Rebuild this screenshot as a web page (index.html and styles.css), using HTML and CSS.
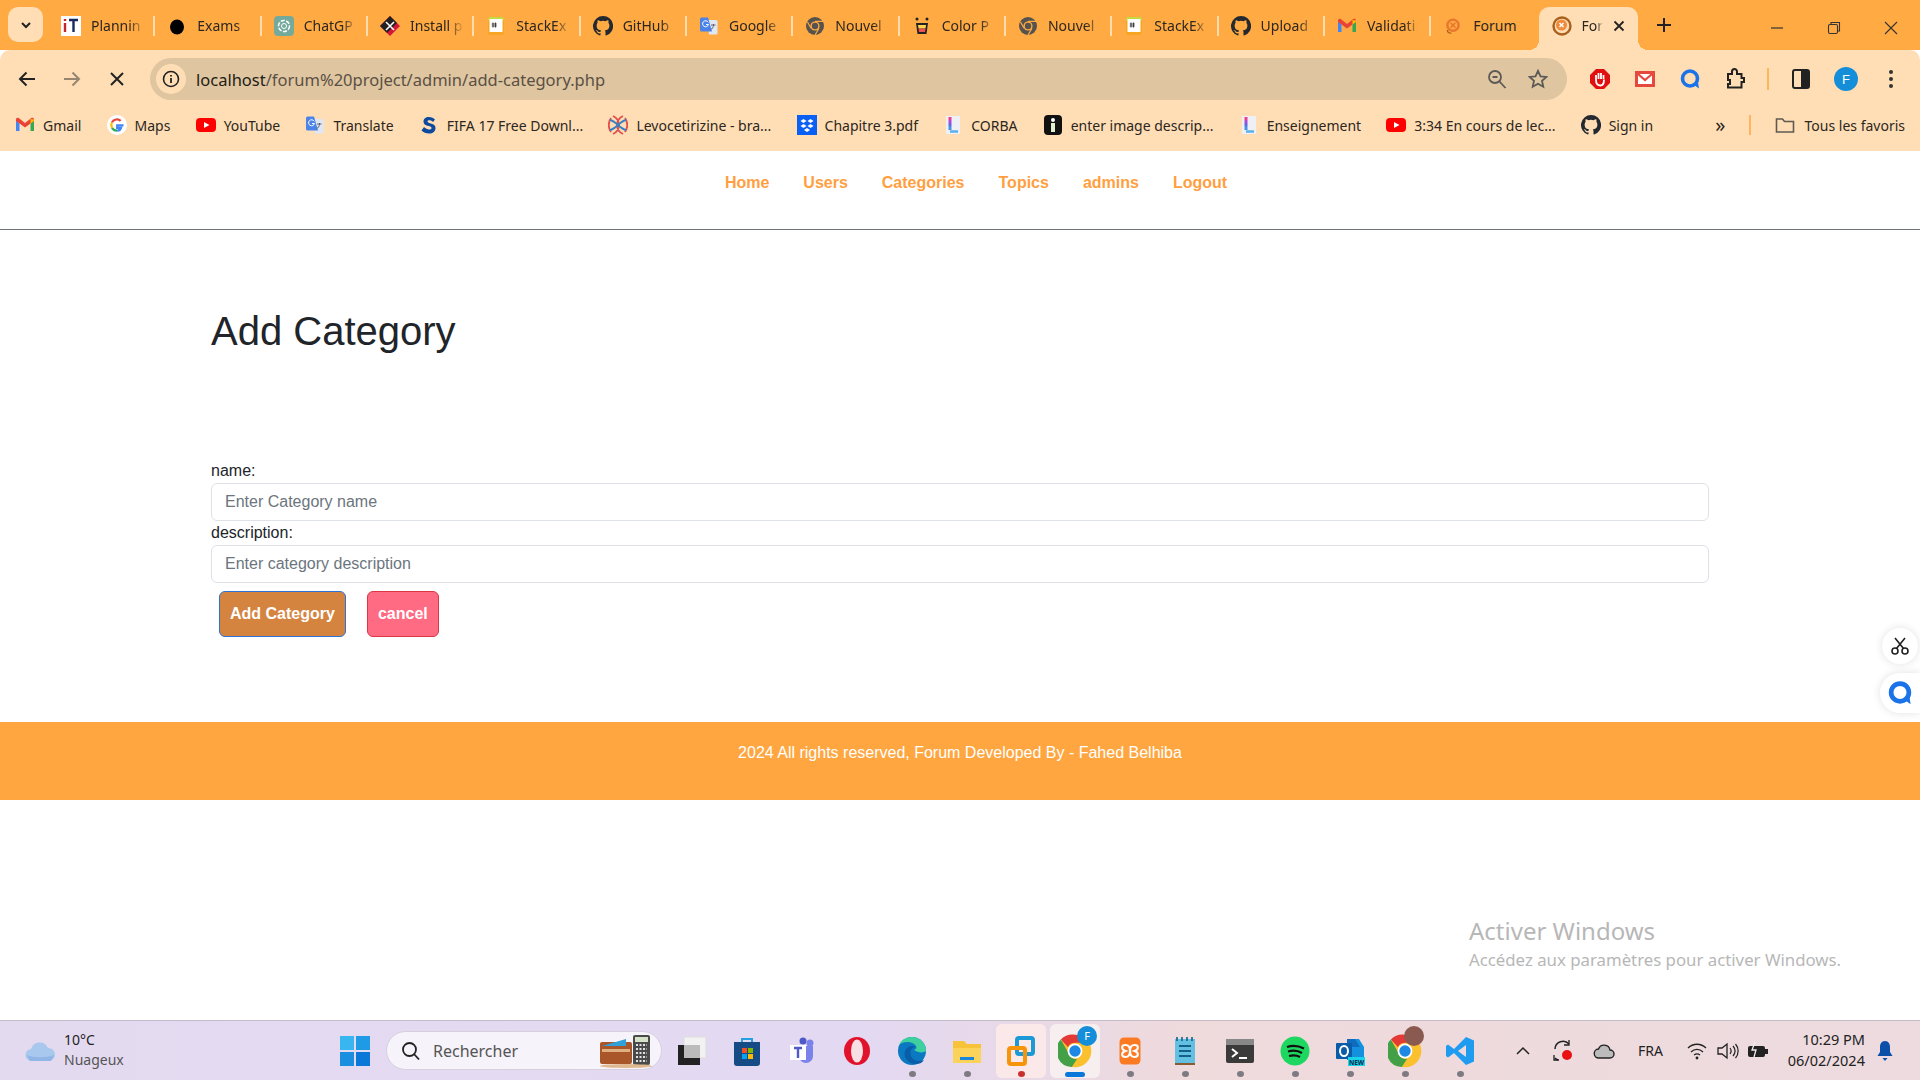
FILE: index.html
```html
<!DOCTYPE html>
<html lang="en">
<head>
    <meta charset="UTF-8">
    <title>Forum</title>
    <link rel="stylesheet" href="styles.css">
</head>
<body>

<svg class="defs" width="0" height="0">
    <symbol id="i-github" viewBox="0 0 16 16"><path fill="#24292f" d="M8 0a8 8 0 0 0-2.53 15.59c.4.07.55-.17.55-.38v-1.35c-2.23.48-2.7-1.07-2.7-1.07-.36-.92-.89-1.17-.89-1.17-.73-.5.05-.49.05-.49.8.06 1.23.83 1.23.83.71 1.22 1.87.87 2.33.66.07-.52.28-.87.5-1.07-1.78-.2-3.64-.89-3.64-3.95 0-.87.31-1.59.82-2.15-.08-.2-.36-1.02.08-2.12 0 0 .67-.21 2.2.82a7.6 7.6 0 0 1 4 0c1.53-1.04 2.2-.82 2.2-.82.44 1.1.16 1.92.08 2.12.51.56.82 1.27.82 2.15 0 3.07-1.87 3.75-3.65 3.95.29.25.54.73.54 1.48v2.2c0 .21.15.46.55.38A8 8 0 0 0 8 0z"/></symbol>
    <symbol id="i-chromegrey" viewBox="0 0 20 20"><circle cx="10" cy="10" r="9" fill="#56524e"/><circle cx="10" cy="10" r="4.6" fill="#ffaa42"/><circle cx="10" cy="10" r="3.2" fill="#56524e"/><path d="M10 5.4h8M6 12.3 2.5 6M14 12.3 10 19" stroke="#ffaa42" stroke-width="1.2"/></symbol>
    <symbol id="i-stack" viewBox="0 0 20 20"><rect x="2" y="1" width="16" height="18" rx="3" fill="#f5a623"/><rect x="2" y="1" width="16" height="4" rx="2" fill="#c7d93f"/><rect x="3.5" y="3" width="13" height="13" fill="#fff"/><path d="M7 6.5v5M9.5 6.5v5M5.8 8h5M5.8 10h5" stroke="#333" stroke-width=".9"/></symbol>
    <symbol id="i-translate" viewBox="0 0 20 20"><path d="M9 4h8a1.5 1.5 0 0 1 1.5 1.5V17a1.5 1.5 0 0 1-1.5 1.5h-7z" fill="#dfe7f5"/><path d="M2.5 1.5H9l4 14H2.5A1.5 1.5 0 0 1 1 14V3a1.5 1.5 0 0 1 1.5-1.5z" fill="#4a84e8"/><path d="M9.2 6.3a3 3 0 1 0 .3 2.2H7" fill="none" stroke="#fff" stroke-width="1"/><path d="M12 9h4.5M14.5 8v1c0 2-1.5 4-3 5" fill="none" stroke="#5f6368" stroke-width="1"/></symbol>
    <symbol id="i-youtube" viewBox="0 0 20 20"><rect y="3" width="20" height="14" rx="4" fill="#f00"/><path d="M8 7l5.5 3L8 13z" fill="#fff"/></symbol>
    <symbol id="i-gmail" viewBox="0 0 20 20"><path d="M1 5.500V16h3.500V8.500z" fill="#4285f4"/><path d="M19 5.500V16h-3.500V8.500z" fill="#34a853"/><path d="M1 6V4.500C1 3 2.800 2.300 4 3.300l6 4.700 6-4.700c1.200-1 3-.3 3 1.200V6l-3.500 2.500L10 12.500 4.500 8.500z" fill="#ea4335"/><path d="M15.500 3.900 19 4.500V6l-3.500 2.500z" fill="#fbbc04"/></symbol>
    <symbol id="i-xampp" viewBox="0 0 20 20"><rect x="3" y="1" width="14" height="18" rx="3" fill="#fb7a24"/><path d="M7 6c3 0 3 3 3 4s0 4-3 4-3-3 0-4c-3-1-3-4 0-4zM13 6c-3 0-3 3-3 4s0 4 3 4 3-3 0-4c3-1 3-4 0-4z" fill="none" stroke="#fff" stroke-width="1.4"/></symbol>
    <symbol id="i-chrome" viewBox="0 0 48 48"><circle cx="24" cy="24" r="23" fill="#fbc02d"/><path d="M24 1a23 23 0 0 1 20 11.500H24a11.500 11.500 0 0 0-10 5.800L4 7.800A23 23 0 0 1 24 1z" fill="#e53935"/><path d="M4 7.800l10 17.700A11.500 11.500 0 0 0 27 35l-7.500 11.600A23 23 0 0 1 4 7.800z" fill="#43a047"/><circle cx="24" cy="24" r="10.500" fill="#fff"/><circle cx="24" cy="24" r="8" fill="#1e88e5"/></symbol>
    <symbol id="i-book" viewBox="0 0 20 20"><rect x="3" y="1" width="14" height="18" fill="#eef0f6"/><path d="M7 2v3" stroke="#e83e8c" stroke-width="3"/><path d="M7 5v3" stroke="#b04ad0" stroke-width="3"/><path d="M7 8v3" stroke="#6a62e0" stroke-width="3"/><path d="M7 11v4" stroke="#4a90e2" stroke-width="3"/><path d="M7 16.500h8" stroke="#5ab0e8" stroke-width="2.500"/></symbol>
</svg>

<div class="tabstrip">
    <button class="tab-list"><svg width="14" height="14" viewBox="0 0 14 14"><path d="M3 5l4 4 4-4" fill="none" stroke="#222" stroke-width="2"/></svg></button>
    <div class="tab"><svg class="ico" viewBox="0 0 20 20"><rect width="20" height="20" fill="#fff"/><path d="M4 3v2M4 7v9" stroke="#c62828" stroke-width="2.4"/><path d="M8 4h9M12.500 4v12" stroke="#1a2a5e" stroke-width="2.4"/></svg><span class="tab-title">Plannin</span></div>
    <div class="tab"><svg class="ico" viewBox="0 0 20 20"><ellipse cx="10" cy="11" rx="7" ry="7.500" fill="#000"/></svg><span class="tab-title">Exams</span></div>
    <div class="tab"><svg class="ico" viewBox="0 0 20 20"><rect width="20" height="20" rx="4" fill="#74aa9c"/><circle cx="10" cy="10" r="5.500" fill="none" stroke="#fff" stroke-width="1.5" stroke-dasharray="4 1.500"/><circle cx="10" cy="10" r="2.500" fill="none" stroke="#fff"/></svg><span class="tab-title">ChatGP</span></div>
    <div class="tab"><svg class="ico" viewBox="0 0 20 20"><path d="M10 0l10 10-10 10L0 10z" fill="#d4153a"/><path d="M10 0l7 7-10 10-7-7z" fill="#222"/><path d="M6 6l8 8M14 6l-8 8" stroke="#fff" stroke-width="1.6"/></svg><span class="tab-title">Install p</span></div>
    <div class="tab"><svg class="ico"><use href="#i-stack"/></svg><span class="tab-title">StackEx</span></div>
    <div class="tab"><svg class="ico"><use href="#i-github"/></svg><span class="tab-title">GitHub</span></div>
    <div class="tab"><svg class="ico"><use href="#i-translate"/></svg><span class="tab-title">Google</span></div>
    <div class="tab"><svg class="ico"><use href="#i-chromegrey"/></svg><span class="tab-title">Nouvel</span></div>
    <div class="tab"><svg class="ico" viewBox="0 0 20 20"><path d="M4 7h12l-1.500 11h-9z" fill="#222"/><path d="M6 9h8l-.5 3.500h-7z" fill="#ffd54f"/><path d="M6.600 12.500h6.900l-.5 3.500H7z" fill="#ef5350"/><circle cx="5" cy="3" r="1.500" fill="#222"/><circle cx="15" cy="3" r="1.500" fill="#222"/></svg><span class="tab-title">Color P</span></div>
    <div class="tab"><svg class="ico"><use href="#i-chromegrey"/></svg><span class="tab-title">Nouvel</span></div>
    <div class="tab"><svg class="ico"><use href="#i-stack"/></svg><span class="tab-title">StackEx</span></div>
    <div class="tab"><svg class="ico"><use href="#i-github"/></svg><span class="tab-title">Upload</span></div>
    <div class="tab"><svg class="ico"><use href="#i-gmail"/></svg><span class="tab-title">Validati</span></div>
    <div class="tab tab-last"><svg class="ico ico-small" viewBox="0 0 20 20"><circle cx="10" cy="9" r="7" fill="none" stroke="#e8772e" stroke-width="3"/><path d="M7 6l6 6M13 6l-6 6" stroke="#e8772e" stroke-width="2"/><path d="M3 15c0 3 3 4 5 4" fill="none" stroke="#a8601c" stroke-width="1.6"/></svg><span class="tab-title">Forum</span></div>
    <div class="tab-active">
        <svg class="ico" viewBox="0 0 20 20"><circle cx="10" cy="10" r="8.500" fill="none" stroke="#a8601c" stroke-width="2.4"/><circle cx="9.500" cy="9" r="5.500" fill="#f08a3c"/><path d="M7.500 7l4 4M11.500 7l-4 4" stroke="#fff" stroke-width="1.5"/></svg>
        <span class="tab-title tab-title-short">For</span>
        <svg class="tab-close" width="12" height="12" viewBox="0 0 12 12"><path d="M1.500 1.500l9 9M10.500 1.500l-9 9" stroke="#222" stroke-width="1.8"/></svg>
    </div>
    <svg class="new-tab" width="16" height="16" viewBox="0 0 16 16"><path d="M8 1v14M1 8h14" stroke="#222" stroke-width="2"/></svg>
    <div class="win-controls">
        <svg width="14" height="14" viewBox="0 0 14 14"><path d="M1 7h12" stroke="#333" stroke-width="1.2"/></svg>
        <svg width="14" height="14" viewBox="0 0 14 14"><rect x="1.500" y="3.500" width="9" height="9" rx="1.500" fill="none" stroke="#333" stroke-width="1.1"/><path d="M4 3V1.500h8.500V10H11" fill="none" stroke="#333" stroke-width="1.1"/></svg>
        <svg width="14" height="14" viewBox="0 0 14 14"><path d="M1 1l12 12M13 1L1 13" stroke="#333" stroke-width="1.1"/></svg>
    </div>
</div>

<div class="toolbar">
    <svg class="nav-btn" viewBox="0 0 20 20"><path d="M18 10H3M9.500 3.500 3 10l6.500 6.500" fill="none" stroke="#222" stroke-width="2"/></svg>
    <svg class="nav-btn" viewBox="0 0 20 20"><path d="M2 10h15M10.500 3.500 17 10l-6.500 6.500" fill="none" stroke="#96866f" stroke-width="2"/></svg>
    <svg class="nav-btn" viewBox="0 0 20 20"><path d="M4 4l12 12M16 4 4 16" fill="none" stroke="#222" stroke-width="2"/></svg>
    <div class="omnibox">
        <span class="site-info"><svg width="18" height="18" viewBox="0 0 18 18"><circle cx="9" cy="9" r="7.500" fill="none" stroke="#222" stroke-width="1.6"/><path d="M9 8v5M9 5v1.600" stroke="#222" stroke-width="1.8"/></svg></span>
        <span class="url"><b>localhost</b>/forum%20project/admin/add-category.php</span>
        <svg class="omni-ico" viewBox="0 0 20 20"><circle cx="8" cy="8" r="6" fill="none" stroke="#5c5a56" stroke-width="1.8"/><path d="M12.500 12.500l6 6.500M5.500 8h5" stroke="#5c5a56" stroke-width="1.8"/></svg>
        <svg class="omni-ico" viewBox="0 0 20 20"><path d="M10 1.800l2.500 5.500 6 .6-4.500 4 1.300 5.900L10 14.800l-5.300 3 1.300-5.900-4.500-4 6-.6z" fill="none" stroke="#5c5a56" stroke-width="1.8"/></svg>
    </div>
    <div class="ext-row">
        <svg class="ext" viewBox="0 0 22 22"><path d="M7 1h8l6 6v8l-6 6H7l-6-6V7z" fill="#e01010"/><path d="M7 12V7M9.500 11V5M12 11V5M14.500 11V7M7 12c0 4 2 5.500 4.500 5.500s3.500-2 3.500-6" fill="none" stroke="#fff" stroke-width="1.8"/></svg>
        <svg class="ext" viewBox="0 0 22 22"><rect x="1" y="3" width="20" height="16" fill="#e5483c"/><rect x="4" y="6" width="14" height="10" fill="#fff"/><path d="M4 6l7 6 7-6" fill="none" stroke="#e5483c" stroke-width="2.2"/></svg>
        <svg class="ext" viewBox="0 0 22 22"><circle cx="11" cy="10.500" r="7.500" fill="none" stroke="#1a73e8" stroke-width="3.6"/><path d="M15 17l5 3.500-1-6z" fill="#1a73e8"/></svg>
        <svg class="ext" viewBox="0 0 22 22"><path d="M4 6h4V3.500a2 2 0 0 1 5 0V6h4.500v4H20v4h-2.500v5.500H4V16h2v-4H4z" fill="none" stroke="#222" stroke-width="2"/></svg>
        <span class="ext-sep"></span>
        <svg class="ext" viewBox="0 0 22 22"><rect x="3" y="2" width="16" height="18" rx="2" fill="none" stroke="#222" stroke-width="2"/><rect x="11" y="2" width="8" height="18" fill="#222"/></svg>
        <span class="avatar">F</span>
        <svg class="ext ext-menu" viewBox="0 0 6 22"><circle cx="3" cy="4" r="2" fill="#333"/><circle cx="3" cy="11" r="2" fill="#333"/><circle cx="3" cy="18" r="2" fill="#333"/></svg>
    </div>
</div>

<div class="bookmarks">
    <span class="bm"><svg class="ico"><use href="#i-gmail"/></svg>Gmail</span>
    <span class="bm"><svg class="ico" viewBox="0 0 20 20"><circle cx="10" cy="10" r="10" fill="#fff"/><path d="M16.500 10.300h-6.300v2.600H14c-.5 1.700-2 2.800-3.900 2.800" fill="none" stroke="#4285f4" stroke-width="2.2"/><path d="M10 15.700a5.700 5.700 0 0 1-5-3" fill="none" stroke="#34a853" stroke-width="2.2"/><path d="M5 12.700a5.700 5.700 0 0 1 0-5.400" fill="none" stroke="#fbbc04" stroke-width="2.2"/><path d="M5 7.300a5.700 5.700 0 0 1 8.700-1.500" fill="none" stroke="#ea4335" stroke-width="2.2"/></svg>Maps</span>
    <span class="bm"><svg class="ico"><use href="#i-youtube"/></svg>YouTube</span>
    <span class="bm"><svg class="ico"><use href="#i-translate"/></svg>Translate</span>
    <span class="bm"><svg class="ico" viewBox="0 0 20 20"><path d="M16 4.500C14.500 3 12.500 2 10 2 6.500 2 4.500 4 4.500 6.500c0 5.500 8 3.500 8 6.500 0 1-1 1.500-2.500 1.500s-3.500-1-5-2.500L2.500 15.500C4.500 17.500 7 18.500 10 18.500c4 0 6.500-2 6.500-5.500 0-5.500-8-4-8-6.500 0-.8.7-1.200 1.800-1.200 1.400 0 2.800.7 3.700 1.600z" fill="#0b4a9e"/></svg>FIFA 17 Free Downl...</span>
    <span class="bm"><svg class="ico" viewBox="0 0 20 20"><path d="M5 1c8 4 8 14 0 18M15 1C7 5 7 15 15 19M3 3c-3 4-3 10 0 14M17 3c3 4 3 10 0 14" fill="none" stroke="#e0504c" stroke-width="1.8"/><path d="M2 5c6 1 10 9 16 10M18 5C12 6 8 14 2 15" fill="none" stroke="#3a7fc4" stroke-width="1.8"/></svg>Levocetirizine - bra...</span>
    <span class="bm"><svg class="ico" viewBox="0 0 20 20"><rect width="20" height="20" fill="#0a5ff5"/><path d="M6.500 4l3 2-3 2-3-2zM13.500 4l3 2-3 2-3-2zM6.500 9l3 2-3 2-3-2zM13.500 9l3 2-3 2-3-2zM10 13l3 2-3 2-3-2z" fill="#fff"/></svg>Chapitre 3.pdf</span>
    <span class="bm"><svg class="ico"><use href="#i-book"/></svg>CORBA</span>
    <span class="bm"><svg class="ico" viewBox="0 0 20 20"><rect x="1" width="18" height="20" rx="4" fill="#111"/><circle cx="10" cy="5" r="2" fill="#fff"/><rect x="8" y="8" width="4" height="9" fill="#dff0d0"/></svg>enter image descrip...</span>
    <span class="bm"><svg class="ico"><use href="#i-book"/></svg>Enseignement</span>
    <span class="bm"><svg class="ico"><use href="#i-youtube"/></svg>3:34 En cours de lec...</span>
    <span class="bm"><svg class="ico"><use href="#i-github"/></svg>Sign in</span>
    <span class="bm-more">»</span>
    <span class="bm-sep"></span>
    <span class="bm bm-all"><svg class="ico" viewBox="0 0 20 20"><path d="M1.500 4h6l2 2.500h9V17h-17z" fill="none" stroke="#5f5a52" stroke-width="1.6"/></svg>Tous les favoris</span>
</div>

<div class="page">
    <nav class="site-nav">
        <a href="#">Home</a>
        <a href="#">Users</a>
        <a href="#">Categories</a>
        <a href="#">Topics</a>
        <a href="#">admins</a>
        <a href="#">Logout</a>
    </nav>

    <main class="content">
        <h1>Add Category</h1>
        <form class="cat-form">
            <label for="catName">name:</label>
            <input type="text" id="catName" placeholder="Enter Category name">
            <label for="catDesc">description:</label>
            <input type="text" id="catDesc" placeholder="Enter category description">
            <div class="form-actions">
                <button type="button" class="btn btn-add">Add Category</button>
                <button type="button" class="btn btn-cancel">cancel</button>
            </div>
        </form>
    </main>

    <footer class="site-footer">2024 All rights reserved, Forum Developed By - Fahed Belhiba</footer>

    <div class="side-tools">
        <span class="side-btn"><svg width="20" height="20" viewBox="0 0 20 20"><circle cx="5" cy="15" r="3" fill="none" stroke="#222" stroke-width="1.6"/><circle cx="15" cy="15" r="3" fill="none" stroke="#222" stroke-width="1.6"/><path d="M6.500 12.500 15 2M13.500 12.500 5 2" stroke="#222" stroke-width="1.6"/></svg></span>
        <span class="side-btn side-btn-wide"><svg width="26" height="26" viewBox="0 0 22 22"><circle cx="11" cy="10.500" r="7.500" fill="none" stroke="#1a73e8" stroke-width="4"/><path d="M15 17l5 3.500-1-6z" fill="#1a73e8"/></svg></span>
    </div>

    <div class="activate">
        <div class="activate-title">Activer Windows</div>
        <div class="activate-sub">Accédez aux paramètres pour activer Windows.</div>
    </div>
</div>

<div class="taskbar">
    <div class="weather">
        <svg width="32" height="24" viewBox="0 0 32 24"><path d="M8 22a6 6 0 0 1-1-12 9 9 0 0 1 17-1 6.500 6.500 0 0 1 1 13z" fill="#a9c8ee"/><path d="M3 16c6 3 20 3 27 0l-3 6H6z" fill="#8fb6e6"/></svg>
        <div class="weather-text"><span>10°C</span><span class="weather-sub">Nuageux</span></div>
    </div>
    <div class="task-center">
        <svg class="start" viewBox="0 0 30 30"><rect width="14" height="14" fill="#38b6f0"/><rect x="16" width="14" height="14" fill="#1f9be6"/><rect y="16" width="14" height="14" fill="#1a8fe0"/><rect x="16" y="16" width="14" height="14" fill="#0a78d8"/></svg>
        <div class="search">
            <svg width="20" height="20" viewBox="0 0 20 20"><circle cx="8.500" cy="8.500" r="6.500" fill="none" stroke="#222" stroke-width="1.8"/><path d="M13 13l5 5.500" stroke="#222" stroke-width="1.8"/></svg>
            <span class="search-text">Rechercher</span>
            <svg class="search-art" width="54" height="34" viewBox="0 0 54 34"><rect x="0" y="8" width="32" height="22" rx="2" fill="#a9572a"/><path d="M2 12l24-7v7z" fill="#2fa0d8"/><rect x="2" y="15" width="28" height="3" fill="#e0b080"/><rect x="33" y="1" width="17" height="30" rx="2" fill="#4a4a4a"/><rect x="35" y="3" width="13" height="5" fill="#d5e2c8"/><path d="M36 11h11M36 15h11M36 19h11M36 23h11M36 27h11" stroke="#e0e0e0" stroke-width="2" stroke-dasharray="2 1.500"/><ellipse cx="26" cy="32" rx="26" ry="2" fill="#e0b890"/></svg>
        </div>
        <div class="app">
            <svg class="app-ico" viewBox="0 0 30 30"><rect x="7" y="1" width="22" height="21" fill="#f2f2f2" stroke="#ddd"/><rect x="1" y="9" width="22" height="20" fill="#222"/><rect x="7" y="9" width="16" height="13" fill="#bbb"/></svg>
        </div>
        <div class="app">
            <svg class="app-ico" viewBox="0 0 30 30"><path d="M10 6V3h10v3" fill="none" stroke="#25a0e0" stroke-width="2"/><path d="M2 6h26v21a3 3 0 0 1-3 3H5a3 3 0 0 1-3-3z" fill="#164c86"/><rect x="10" y="12" width="5" height="5" fill="#f25022"/><rect x="16" y="12" width="5" height="5" fill="#7fba00"/><rect x="10" y="18" width="5" height="5" fill="#00a4ef"/><rect x="16" y="18" width="5" height="5" fill="#ffb900"/></svg>
        </div>
        <div class="app">
            <svg class="app-ico" viewBox="0 0 30 30"><circle cx="23" cy="7" r="3.500" fill="#7b83eb"/><circle cx="16" cy="5" r="3.500" fill="#5059c9"/><path d="M12 10h14v10a7 7 0 0 1-14 0z" fill="#7b83eb"/><rect x="3" y="9" width="16" height="15" fill="#fff"/><path d="M7 12h8M11 12v10" stroke="#5059c9" stroke-width="2.4"/></svg>
        </div>
        <div class="app">
            <svg class="app-ico" viewBox="0 0 30 30"><ellipse cx="15" cy="15" rx="13" ry="14" fill="#e0122c"/><ellipse cx="15" cy="15" rx="6" ry="11.500" fill="#f7e0e4"/></svg>
        </div>
        <div class="app app-open">
            <svg class="app-ico" viewBox="0 0 30 30"><circle cx="15" cy="15" r="14" fill="#0b78c2"/><path d="M29 15c0-8-6-14-14-14C9 1 4 4 2 9c4-4 14-4 17 1 1 2 0 3-2 4 4 3 10 3 12 1z" fill="#3fd0a0"/><path d="M14 20c-2-5 1-9 5-9-3-2-9-1-11 4-2 6 3 13 11 13 3 0 6-1 8-4-5 2-11 1-13-4z" fill="#0a5ea8"/></svg>
        </div>
        <div class="app app-open">
            <svg class="app-ico" viewBox="0 0 30 30"><path d="M1 5h11l3 3h14v19H1z" fill="#f8c33a"/><rect x="1" y="12" width="28" height="15" fill="#fbd35a"/><rect x="8" y="21" width="14" height="3" fill="#1a86d8"/></svg>
        </div>
        <div class="app app-open app-vm">
            <svg class="app-ico" viewBox="0 0 30 30"><rect x="11" y="2" width="16" height="16" rx="2" fill="none" stroke="#1c9ad6" stroke-width="4"/><rect x="3" y="12" width="16" height="16" rx="2" fill="none" stroke="#f7950a" stroke-width="4"/></svg>
        </div>
        <div class="app app-open app-current">
            <svg class="app-ico app-chrome"><use href="#i-chrome"/></svg>
            <span class="app-badge">F</span>
        </div>
        <div class="app app-open">
            <svg class="app-ico"><use href="#i-xampp"/></svg>
        </div>
        <div class="app app-open">
            <svg class="app-ico" viewBox="0 0 30 30"><rect x="5" y="3" width="20" height="26" fill="#63c0e0"/><rect x="5" y="27" width="20" height="2" fill="#8a5a30"/><path d="M9 10h12M9 15h12M9 20h12" stroke="#13608c" stroke-width="2"/><path d="M7 1v4M12 1v4M17 1v4M22 1v4" stroke="#13608c" stroke-width="1.6"/></svg>
        </div>
        <div class="app app-open">
            <svg class="app-ico" viewBox="0 0 30 30"><rect x="1" y="3" width="28" height="24" rx="2" fill="#3a3a3a"/><rect x="1" y="3" width="28" height="6" fill="#888"/><path d="M7 13l5 4-5 4M14 22h8" fill="none" stroke="#fff" stroke-width="2"/></svg>
        </div>
        <div class="app app-open">
            <svg class="app-ico" viewBox="0 0 30 30"><circle cx="15" cy="15" r="14.500" fill="#1ed760"/><path d="M7 11c6-2 12-1 17 1.500M8 15.500c5-1.500 10-1 14 1.500M9 20c4-1 8-.7 11 1" fill="none" stroke="#111" stroke-width="2.2"/></svg>
        </div>
        <div class="app app-open">
            <svg class="app-ico" viewBox="0 0 30 30"><path d="M12 3h12l5 8v13H12z" fill="#1490df"/><path d="M12 3h8l5 8H12z" fill="#0f6cbd"/><rect x="1" y="7" width="16" height="16" rx="1" fill="#0a5ca8"/><ellipse cx="9" cy="15" rx="4" ry="5" fill="none" stroke="#fff" stroke-width="2"/><rect x="13" y="21" width="17" height="9" fill="#19d3e8"/><text class="new-label" x="21.500" y="28.500">NEW</text></svg>
        </div>
        <div class="app app-open">
            <svg class="app-ico app-chrome"><use href="#i-chrome"/></svg>
            <span class="app-badge app-badge-photo"></span>
        </div>
        <div class="app app-open">
            <svg class="app-ico" viewBox="0 0 30 30"><path d="M21 1 9 13 3 8.500 1 10v10l2 1.500L9 17l12 12 8-3.500V4.500zM21 9v12l-8-6z" fill="#1f9cf0"/></svg>
        </div>
    </div>
    <div class="tray">
        <svg class="tray-up" width="14" height="9" viewBox="0 0 14 9"><path d="M1 8l6-6 6 6" fill="none" stroke="#222" stroke-width="1.5"/></svg>
        <svg class="tray-sync" width="22" height="24" viewBox="0 0 22 24"><path d="M3 10a8 8 0 0 1 14-5M3 19a8 8 0 0 0 3 2" fill="none" stroke="#222" stroke-width="1.5"/><path d="M17 1v5h-5M2 16v5h5" fill="none" stroke="#222" stroke-width="1.3"/><circle cx="15" cy="16" r="5" fill="#e81010"/></svg>
        <svg class="tray-cloud" width="22" height="18" viewBox="0 0 22 18"><path d="M6 16a4.500 4.500 0 0 1-.5-9 6 6 0 0 1 11.500 1 4 4 0 0 1 0 8z" fill="#bbb" stroke="#222" stroke-width="1.4"/></svg>
        <span class="tray-lang">FRA</span>
        <svg class="tray-wifi" width="20" height="18" viewBox="0 0 20 18"><path d="M1 6c5-5 13-5 18 0M4 10c3.500-3.500 8.500-3.500 12 0M7 13c2-1.500 4-1.500 6 0" fill="none" stroke="#222" stroke-width="1.3"/><circle cx="10" cy="16" r="1.400" fill="#222"/></svg>
        <svg class="tray-vol" width="22" height="18" viewBox="0 0 22 18"><path d="M1 6h4l5-4v14l-5-4H1z" fill="none" stroke="#222" stroke-width="1.3"/><path d="M13 6c1.500 2 1.500 4 0 6M16 4c2.500 3 2.500 7 0 10M18.500 2c3.500 4 3.500 10 0 14" fill="none" stroke="#222" stroke-width="1.2"/></svg>
        <svg class="tray-bat" width="22" height="18" viewBox="0 0 22 18"><rect x="1" y="4" width="17" height="11" rx="2" fill="#222"/><rect x="18" y="7" width="3" height="5" fill="#222"/><path d="M8 0 5 8h4l-2 7" fill="none" stroke="#eee" stroke-width="1.3"/></svg>
        <div class="clock"><span>10:29 PM</span><span>06/02/2024</span></div>
        <svg class="tray-bell" width="18" height="22" viewBox="0 0 18 22"><path d="M9 1c-3.500 0-5 3-5 6v5l-2.500 4h15L14 12V7c0-3-1.500-6-5-6z" fill="#0b4fa8"/><path d="M6.500 18h5l-2.500 3z" fill="#0b4fa8"/></svg>
    </div>
</div>

</body>
</html>
```

FILE: styles.css
```css
* {
    box-sizing: border-box;
}
html, body {
    margin: 0;
    padding: 0;
}
body {
    width: 1920px;
    height: 1080px;
    overflow: hidden;
    display: flex;
    flex-direction: column;
    font-family: "Liberation Sans", Arial, sans-serif;
    background-color: #fff;
}
.defs {
    position: absolute;
}
.ico {
    width: 20px;
    height: 20px;
    flex: none;
}

/* browser tabs */
.tabstrip {
    height: 50px;
    flex: none;
    display: flex;
    align-items: flex-end;
    padding-left: 8px;
    background-color: #ffaa42;
    font-family: "Noto Sans", sans-serif;
    font-size: 14px;
    color: #2c2620;
}
.tab-list {
    width: 35px;
    height: 35px;
    margin: 0 6px 8px 0;
    padding: 0;
    border: none;
    border-radius: 10px;
    background-color: #ffdeb6;
    display: flex;
    align-items: center;
    justify-content: center;
}
.tab {
    width: 106.33px;
    height: 43px;
    flex: none;
    padding: 0 10px 6px 12px;
    display: flex;
    align-items: center;
    gap: 10px;
    position: relative;
}
.tab::after {
    content: "";
    position: absolute;
    right: 0;
    top: 9px;
    width: 2px;
    height: 20px;
    background-color: #ffdcae;
}
.tab-last::after {
    display: none;
}
.tab-title {
    white-space: nowrap;
    flex: 1;
    -webkit-mask-image: linear-gradient(to right, #000 70%, transparent 100%);
    mask-image: linear-gradient(to right, #000 70%, transparent 100%);
}
.tab-last .tab-title {
    -webkit-mask-image: none;
    mask-image: none;
}
.ico-small {
    width: 16px;
    height: 16px;
    margin: 0 2px;
}
.tab-active {
    width: 99px;
    height: 43px;
    flex: none;
    margin-left: 1px;
    padding: 0 14px 6px 13px;
    display: flex;
    align-items: center;
    gap: 10px;
    border-radius: 10px 10px 0 0;
    background-color: #ffdeb6;
    position: relative;
}
.tab-active::before, .tab-active::after {
    content: "";
    position: absolute;
    bottom: 0;
    width: 10px;
    height: 10px;
    background-color: #ffdeb6;
    -webkit-mask-image: radial-gradient(circle at 0 0, transparent 10px, #000 10px);
    mask-image: radial-gradient(circle at 0 0, transparent 10px, #000 10px);
}
.tab-active::before {
    left: -10px;
}
.tab-active::after {
    right: -10px;
    transform: scaleX(-1);
}
.tab-title-short {
    flex: none;
}
.tab-close {
    flex: none;
    margin-left: auto;
}
.new-tab {
    margin: 0 0 17px 18px;
    flex: none;
}
.win-controls {
    margin-left: auto;
    padding: 0 22px 15px 0;
    display: flex;
    gap: 43px;
}

/* address bar */
.toolbar {
    height: 51px;
    flex: none;
    display: flex;
    align-items: center;
    padding: 7px 0 0 17px;
    background-color: #ffdeb6;
    border-radius: 10px 10px 0 0;
}
.nav-btn {
    width: 20px;
    height: 20px;
    flex: none;
    margin-right: 25px;
}
.omnibox {
    width: 1417px;
    height: 42px;
    margin-left: -2px;
    flex: none;
    display: flex;
    align-items: center;
    padding: 0 19px 0 6px;
    gap: 21px;
    border-radius: 21px;
    background-color: #dfc5a0;
}
.site-info {
    width: 30px;
    height: 30px;
    flex: none;
    display: flex;
    align-items: center;
    justify-content: center;
    border-radius: 50%;
    background-color: #ffdeb6;
}
.url {
    flex: 1;
    margin-left: -11px;
    font-family: "Noto Sans", sans-serif;
    font-size: 16.5px;
    color: #5a5044;
}
.url b {
    font-weight: normal;
    color: #221d16;
}
.omni-ico {
    width: 20px;
    height: 20px;
    flex: none;
}
.ext-row {
    display: flex;
    align-items: center;
    margin-left: 22px;
    gap: 23px;
}
.ext {
    width: 22px;
    height: 22px;
    flex: none;
}
.ext-menu {
    width: 6px;
    margin-left: 6px;
}
.ext-sep {
    width: 2px;
    height: 22px;
    margin: 0 -2px;
    background-color: #ffb45e;
}
.avatar {
    width: 24px;
    height: 24px;
    margin: 0 1px 0 -1px;
    border-radius: 50%;
    background-color: #148ed8;
    color: #fff;
    font-size: 13px;
    display: flex;
    align-items: center;
    justify-content: center;
}

/* bookmarks */
.bookmarks {
    height: 50px;
    flex: none;
    display: flex;
    align-items: center;
    padding: 0 15px 2px 15px;
    background-color: #ffdeb6;
    font-family: "Noto Sans", sans-serif;
    font-size: 14px;
    color: #2c2620;
}
.bm {
    display: flex;
    align-items: center;
    gap: 8px;
    margin-right: 25.2px;
    white-space: nowrap;
}
.bm-more {
    margin-left: 37px;
    font-size: 20px;
    line-height: 20px;
}
.bm-sep {
    width: 2px;
    height: 20px;
    margin-left: 24px;
    background-color: #ffb45e;
}
.bm-all {
    margin: 0 0 0 auto;
    gap: 10px;
}

/* the forum page */
.page {
    flex: 1;
    position: relative;
    display: flex;
    flex-direction: column;
    color: #212529;
}
.site-nav {
    height: 79px;
    flex: none;
    padding: 20px 0 0 32px;
    display: flex;
    justify-content: center;
    gap: 34px;
    border-bottom: 1px solid #6c7278;
}
.site-nav a {
    font-weight: bold;
    font-size: 16px;
    line-height: 24px;
    color: #ff9f3f;
    text-decoration: none;
}
.content {
    padding: 77px 211px 85px;
    flex: none;
}
h1 {
    margin: 0 0 104px;
    font-size: 40px;
    font-weight: 500;
    line-height: 48px;
}
.cat-form label {
    display: block;
    font-size: 16px;
    line-height: 24px;
}
.cat-form input {
    display: block;
    width: 100%;
    height: 38px;
    padding: 6px 13px;
    border: 1px solid #dee2e6;
    border-radius: 6px;
    font-family: inherit;
    font-size: 16px;
}
.cat-form input::placeholder {
    color: #6c757d;
}
.form-actions {
    display: flex;
    gap: 21px;
    margin-top: 8px;
    padding-left: 8px;
}
.btn {
    height: 46px;
    padding: 0 10px;
    border: 1px solid;
    border-radius: 6px;
    color: #fff;
    font-family: inherit;
    font-size: 16px;
    font-weight: bold;
}
.btn-add {
    background-color: #d58440;
    border-color: #2b72d7;
}
.btn-cancel {
    padding: 0 10px;
    background-color: #ff6b83;
    border-color: #dc3545;
}
.site-footer {
    height: 78px;
    flex: none;
    padding-top: 19px;
    background-color: #ffa640;
    color: #fff;
    font-size: 16px;
    line-height: 24px;
    text-align: center;
}
.side-tools {
    position: absolute;
    right: 0;
    top: 477px;
    display: flex;
    flex-direction: column;
    align-items: flex-end;
    gap: 9px;
}
.side-btn {
    width: 36px;
    height: 36px;
    display: flex;
    align-items: center;
    justify-content: center;
    border-radius: 50%;
    margin-right: 2px;
    background-color: #fff;
    box-shadow: 0 0 8px rgba(0, 0, 0, 0.12);
}
.side-btn-wide {
    width: 40px;
    height: 40px;
    margin-right: 0;
    border-radius: 20px 0 0 20px;
}
.activate {
    position: absolute;
    left: 1469px;
    top: 763px;
    color: #b7b7b7;
    font-family: "Noto Sans", sans-serif;
}
.activate-title {
    font-size: 24px;
    line-height: 34px;
}
.activate-sub {
    margin-top: 1px;
    font-size: 16.8px;
    line-height: 22px;
}

/* windows taskbar */
.taskbar {
    height: 60px;
    flex: none;
    display: flex;
    align-items: center;
    border-top: 1px solid #c3bbc8;
    background: linear-gradient(to right, #e4daf0 0%, #e3d9f2 45%, #efdadc 62%, #eddbdf 100%);
    font-family: "Noto Sans", sans-serif;
    font-size: 14px;
    color: #222;
    position: relative;
}
.weather {
    width: 340px;
    flex: none;
    padding-left: 24px;
    display: flex;
    align-items: center;
    gap: 8px;
}
.weather-text {
    margin-top: -2px;
    display: flex;
    flex-direction: column;
    line-height: 20px;
}
.weather-sub {
    color: #555;
}
.task-center {
    display: flex;
    align-items: center;
}
.start {
    width: 30px;
    height: 30px;
    flex: none;
}
.search {
    width: 276px;
    height: 39px;
    margin: 0 2px 0 16px;
    padding: 0 7px 0 14px;
    display: flex;
    align-items: center;
    gap: 12px;
    border-radius: 20px;
    border: 1px solid #d6cfe0;
    background-color: #f6f3fa;
    font-size: 16px;
    color: #555;
}
.search-text {
    flex: 1;
}
.app {
    width: 55px;
    height: 54px;
    flex: none;
    display: flex;
    align-items: center;
    justify-content: center;
    position: relative;
    border-radius: 6px;
}
.app-ico {
    width: 30px;
    height: 30px;
}
.app-open::after {
    content: "";
    position: absolute;
    bottom: 1px;
    left: 50%;
    width: 7px;
    height: 6px;
    margin-left: -3px;
    border-radius: 50%;
    background-color: #7d7a82;
}
.app-vm {
    width: 50px;
    margin: 0 2px;
    background-color: #fbe9ea;
}
.app-vm::after {
    background-color: #c8302e;
}
.app-current {
    width: 50px;
    margin: 0 2px;
    background-color: #f6eeef;
}
.app-current::after {
    width: 20px;
    height: 5px;
    margin-left: -10px;
    border-radius: 3px;
    background-color: #0a78d8;
}
.app-chrome {
    width: 34px;
    height: 34px;
}
.app-badge {
    position: absolute;
    top: 2px;
    right: 3px;
    width: 20px;
    height: 20px;
    border-radius: 50%;
    background-color: #148ed8;
    color: #fff;
    font-size: 11px;
    line-height: 20px;
    text-align: center;
}
.app-badge-photo {
    right: 8px;
    background-color: #8a5a50;
}
.new-label {
    font-size: 6.5px;
    font-weight: bold;
    text-anchor: middle;
    fill: #0a2a50;
}
.tray {
    position: absolute;
    left: 1516px;
    right: 0;
    top: 0;
    bottom: 0;
    display: flex;
    align-items: center;
}
.tray-sync {
    margin-left: 22px;
}
.tray-cloud {
    margin-left: 19px;
}
.tray-lang {
    margin-left: 23px;
    font-size: 14px;
}
.tray-wifi {
    margin-left: 24px;
}
.tray-vol {
    margin-left: 10px;
}
.tray-bat {
    margin-left: 8px;
}
.clock {
    margin: -2px 0 0 16px;
    width: 80px;
    display: flex;
    flex-direction: column;
    align-items: flex-end;
    font-size: 14.5px;
    line-height: 21px;
    white-space: nowrap;
}
.tray-bell {
    margin-left: 11px;
}
```
